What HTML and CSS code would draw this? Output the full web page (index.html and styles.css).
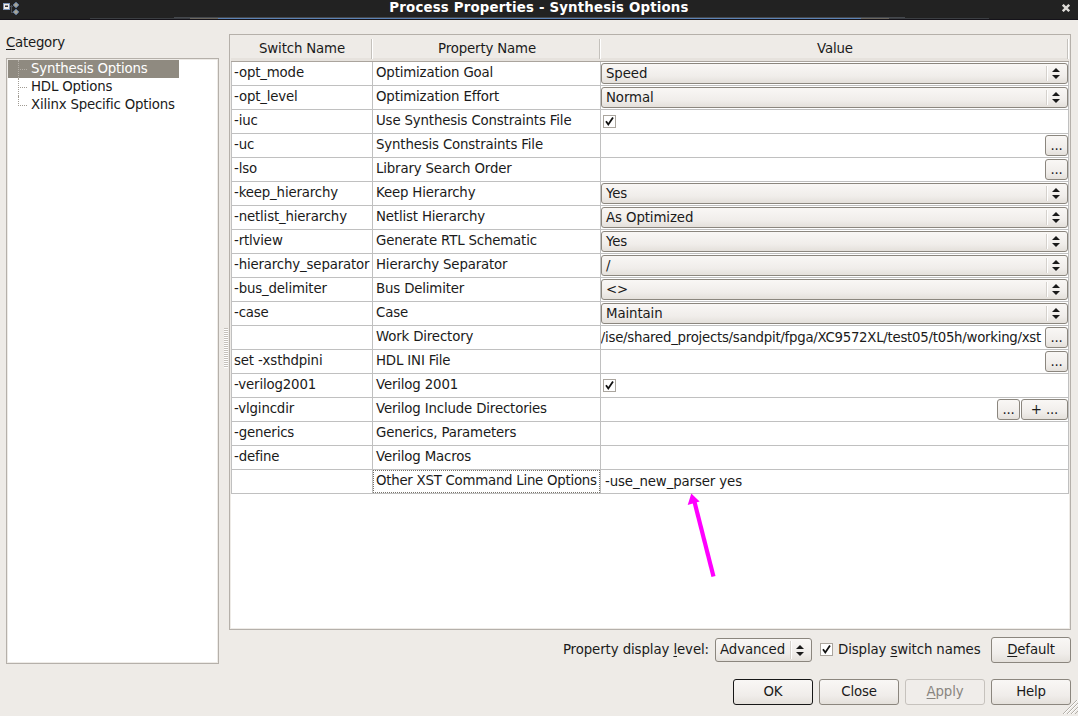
FILE: index.html
```
<!DOCTYPE html>
<html lang="en">
<head>
<meta charset="utf-8">
<title>Process Properties - Synthesis Options</title>
<link rel="stylesheet" href="styles.css">
</head>
<body>
<header class="titlebar">
  <svg class="app-icon" width="20" height="18" viewBox="0 0 20 18">
    <path d="M10 6.5h3M11.5 5v7M11 12.5h3" stroke="#4a4f57" fill="none"/>
    <rect x="3" y="3" width="7" height="7" fill="#7d97bb"/>
    <rect x="4" y="4" width="5" height="5" fill="#f1eee8"/>
    <rect x="5" y="5" width="3" height="1" fill="#888"/>
    <rect x="5" y="6" width="3" height="1" fill="#333"/>
    <path d="M16 2.200l2.800 2.800-2.800 2.800L13.200 5zM16 9.200l2.800 2.800-2.800 2.800-2.800-2.800z" fill="#a9a595" stroke="#6283b0"/>
  </svg>
  <h1 class="title">Process Properties - Synthesis Options</h1>
  <svg class="close" width="8" height="8" viewBox="0 0 8 8"><path d="M.8 .8l6.400 6.400M7.200 .8l-6.400 6.400" stroke="#dedcd8" stroke-width="2.400"/></svg>
  <span class="streak streak-wide"></span>
  <span class="streak streak-top"></span>
  <span class="streak streak-blue"></span>
</header>
<div class="workspace">
  <aside class="sidebar">
    <div class="label"><u>C</u>ategory</div>
    <ul class="tree">
      <li class="node selected">Synthesis Options</li>
      <li class="node">HDL Options</li>
      <li class="node last">Xilinx Specific Options</li>
    </ul>
  </aside>
  <div class="splitter"><span class="grip"></span></div>
  <main class="content">
    <div class="table">
      <div class="head"><span>Switch Name</span><span>Property Name</span><span>Value</span></div>
      <div class="rows" id="rows"></div>
      <svg class="arrow" width="40" height="90" viewBox="0 0 40 90"><path d="M28.500 88.500L9.500 14" stroke="#f0f" stroke-width="4.200"/><path d="M6.300 5.500L14.600 13.400L2.700 17z" fill="#f0f"/></svg>
    </div>
    <div class="options">
      <span class="level-label">Property display <u>l</u>evel:</span>
      <span class="combo level"><span class="combo-text">Advanced</span><span class="combo-end"><svg class="arrows" width="8" height="11" viewBox="0 0 8 11"><path d="M0 4L4 0L8 4zM0 7h8l-4 4z"/></svg></span></span>
      <span class="check"><svg width="11" height="11" viewBox="0 0 11 11"><path d="M2 5.200L4.300 8.500L9 1.500"/></svg></span>
      <span class="check-label">Display <u>s</u>witch names</span>
      <button class="button"><u>D</u>efault</button>
    </div>
  </main>
</div>
<footer class="actions">
  <button class="button primary">OK</button>
  <button class="button">Close</button>
  <button class="button disabled"><u>A</u>pply</button>
  <button class="button">Help</button>
</footer>
<svg class="resize" width="16" height="16" viewBox="0 0 16 16"><path d="M1 14L15 0M5 14L16 3M9 14L16 7M13 14L16 11" stroke="#b3afa8"/><path d="M2 14L16 0M6 14L16 4M10 14L16 8" stroke="#fff"/></svg>
<script src="rows.js"></script>
</body>
</html>
```
FILE: rows.js
```
const rows = [
  ['-opt_mode', 'Optimization Goal', 'combo', 'Speed'],
  ['-opt_level', 'Optimization Effort', 'combo', 'Normal'],
  ['-iuc', 'Use Synthesis Constraints File', 'check'],
  ['-uc', 'Synthesis Constraints File', 'browse', ''],
  ['-lso', 'Library Search Order', 'browse', ''],
  ['-keep_hierarchy', 'Keep Hierarchy', 'combo', 'Yes'],
  ['-netlist_hierarchy', 'Netlist Hierarchy', 'combo', 'As Optimized'],
  ['-rtlview', 'Generate RTL Schematic', 'combo', 'Yes'],
  ['-hierarchy_separator', 'Hierarchy Separator', 'combo', '/'],
  ['-bus_delimiter', 'Bus Delimiter', 'combo', '&lt;&gt;'],
  ['-case', 'Case', 'combo', 'Maintain'],
  ['', 'Work Directory', 'browse', '/ise/shared_projects/sandpit/fpga/XC9572XL/test05/t05h/working/xst'],
  ['set -xsthdpini', 'HDL INI File', 'browse', ''],
  ['-verilog2001', 'Verilog 2001', 'check'],
  ['-vlgincdir', 'Verilog Include Directories', 'list'],
  ['-generics', 'Generics, Parameters', 'text', ''],
  ['-define', 'Verilog Macros', 'text', ''],
  ['', 'Other XST Command Line Options', 'text', '-use_new_parser yes'],
];
const arrows = '<svg class="arrows" width="8" height="11" viewBox="0 0 8 11"><path d="M0 4L4 0L8 4zM0 7h8l-4 4z"/></svg>';
const render = {
  combo: v => `<span class="combo"><span class="combo-text">${v}</span><span class="combo-end">${arrows}</span></span>`,
  check: () => '<span class="check"><svg width="11" height="11" viewBox="0 0 11 11"><path d="M2 5.200L4.300 8.500L9 1.500"/></svg></span>',
  browse: v => `<span class="path"><span>${v}</span></span><button class="mini">...</button>`,
  list: () => '<span class="path"></span><button class="mini">...</button><button class="mini add">+ ...</button>',
  text: v => `<span class="text">${v}</span>`,
};
document.getElementById('rows').innerHTML = rows.map(([name, prop, kind, value], i) =>
  `<div class="row"><span class="cell">${name}</span><span class="cell prop${i === rows.length - 1 ? ' focused' : ''}">${prop}</span><span class="cell value">${render[kind](value)}</span></div>`
).join('');
```
FILE: styles.css
```
* { box-sizing: border-box; }
body {
  margin: 0;
  width: 1078px;
  height: 716px;
  overflow: hidden;
  position: relative;
  background: #eeebe7;
  color: #1a1a1a;
  font: 13.333px/18px "DejaVu Sans", sans-serif;
  letter-spacing: -0.160px;
}
u { text-decoration: underline; text-decoration-thickness: 1px; text-underline-offset: 2px; }
button { font: inherit; letter-spacing: inherit; color: inherit; padding: 0; }

.titlebar {
  position: relative;
  height: 20px;
  display: flex;
  justify-content: center;
  background: #222;
  border-bottom: 1px solid #15131a;
}
.title { margin: -2px 0 0; color: #fff; font-size: 13.333px; letter-spacing: 0.180px; line-height: 19px; font-weight: bold; }
.app-icon { position: absolute; left: 0; top: 0; }
.close { position: absolute; right: 8px; top: 4px; }
.streak { position: absolute; height: 1px; }
.streak-wide { left: 90px; right: 89px; top: 18px; background: #3c3f43; }
.streak-top { left: 174px; right: 173px; top: 17px; background: #45484d; }
.streak-blue { left: 190px; right: 189px; top: 18px; background: linear-gradient(90deg, #6b675f 28px, #5b82b4 28px 671px, #6b675f 671px); }

.workspace { display: flex; height: 644px; padding: 14px 7px 0 6px; }
.sidebar { width: 213px; }
.label { height: 24px; letter-spacing: -0.250px; }
.tree {
  height: 606px;
  margin: 0;
  padding: 1px;
  list-style: none;
  background: #fff;
  border: 1px solid #b5b0aa;
  box-shadow: inset 0 0 0 1px #eeebe7;
}
.node { position: relative; height: 18px; width: 171px; padding-left: 23px; white-space: nowrap; letter-spacing: -0.200px; }
.node::before { content: ""; position: absolute; left: 10px; top: 0; width: 9px; height: 18px; border-left: 1px dotted #a09b93; }
.node::after { content: ""; position: absolute; left: 12px; top: 9px; width: 7px; border-top: 1px dotted #a09b93; }
.last::before { height: 10px; }
.selected { background: #8f8a80; color: #fff; }
.selected::before, .selected::after { border-color: #b5b0a8; }

.splitter { width: 10px; padding: 294px 0 0 5px; }
.grip { display: block; width: 4px; height: 40px; background: repeating-linear-gradient(#c4c0ba 0 1px, #fff 1px 2px); }

.content { width: 842px; }
.table {
  position: relative;
  height: 596px;
  padding: 1px;
  background: #fff;
  border: 1px solid #b5b0aa;
  box-shadow: inset 0 0 0 1px #eeebe7;
}
.head, .row { display: grid; grid-template-columns: 141px 228px 468px; }
.head {
  height: 26px;
  padding-top: 3px;
  background: linear-gradient(#eeebe7 22px, #e6e2dd 22px);
  border-bottom: 1px solid #aaa49d;
  text-align: center;
  line-height: 19px;
}
.head span { height: 20px; padding-left: 3px; border-right: 1px solid #c4c1bc; box-shadow: 1px 0 #fff; }
.head span:first-child { padding-left: 2px; }
.rows { width: 838px; border-left: 1px solid #c0c0c0; }
.row { height: 24px; border-bottom: 1px solid #c0c0c0; }
.cell { padding: 2px 0 0 2px; border-right: 1px solid #c0c0c0; white-space: nowrap; min-width: 0; }
.prop { padding-left: 3px; }
.focused { position: relative; letter-spacing: -0.250px; }
.focused::after { content: ""; position: absolute; inset: 0; border: 1px dotted #77736b; }
.value { display: flex; padding: 1px 0 0; }

.combo {
  display: flex;
  flex: 1;
  height: 21px;
  border: 1px solid #8b867e;
  border-radius: 3px;
  background: linear-gradient(#f9f7f5, #f0edea 65%, #e4e0db);
}
.combo-text { flex: 1; padding: 1px 0 0 4px; letter-spacing: -0.100px; }
.combo-end { width: 21px; margin: 2px 0; border-left: 1px solid #d5d1cc; box-shadow: inset 1px 0 #fff; display: flex; align-items: center; padding-left: 5px; }
.arrows { fill: #1a1a1a; }
.check { flex: none; width: 13px; height: 13px; border: 1px solid #aaa59e; background: #fff; display: flex; }
.value .check { margin: 4px 0 0 2px; }
.check path { fill: none; stroke: #111; stroke-width: 1.800; }
.path { flex: 1; min-width: 0; display: flex; justify-content: flex-end; overflow: hidden; padding: 2px 4px 0 0; }
.path span { letter-spacing: -0.267px; }
.mini, .button {
  border: 1px solid #8b867e;
  border-radius: 3px;
  background: linear-gradient(#f9f7f5, #f0edea 65%, #e4e0db);
}
.mini { width: 23px; height: 21px; line-height: 18px; flex: none; }
.add { width: 47px; margin-left: 1px; }
.text { padding: 2px 0 0 4px; letter-spacing: -0.120px; }
.arrow { position: absolute; left: 455px; top: 453px; }

.options { display: flex; justify-content: flex-end; padding-top: 7px; line-height: 26px; }
.level-label { letter-spacing: -0.100px; }
.level { flex: none; width: 97px; height: 24px; margin: 1px 0 0 6px; line-height: 18px; }
.level .combo-text { padding-top: 2px; }
.options .check { margin: 6px 5px 0 8px; }
.check-label { width: 143px; white-space: nowrap; letter-spacing: -0.120px; }
.options .button { margin-left: 10px; }
.button { width: 80px; height: 26px; line-height: 22px; }
.actions { display: flex; justify-content: flex-end; gap: 6px; padding: 15px 7px 0; }
.primary { border-color: #171717; }
.disabled { color: #89857f; border-color: #c6c2bd; background: #f0edea; }
.resize { position: absolute; right: 0; bottom: 0; }
```
